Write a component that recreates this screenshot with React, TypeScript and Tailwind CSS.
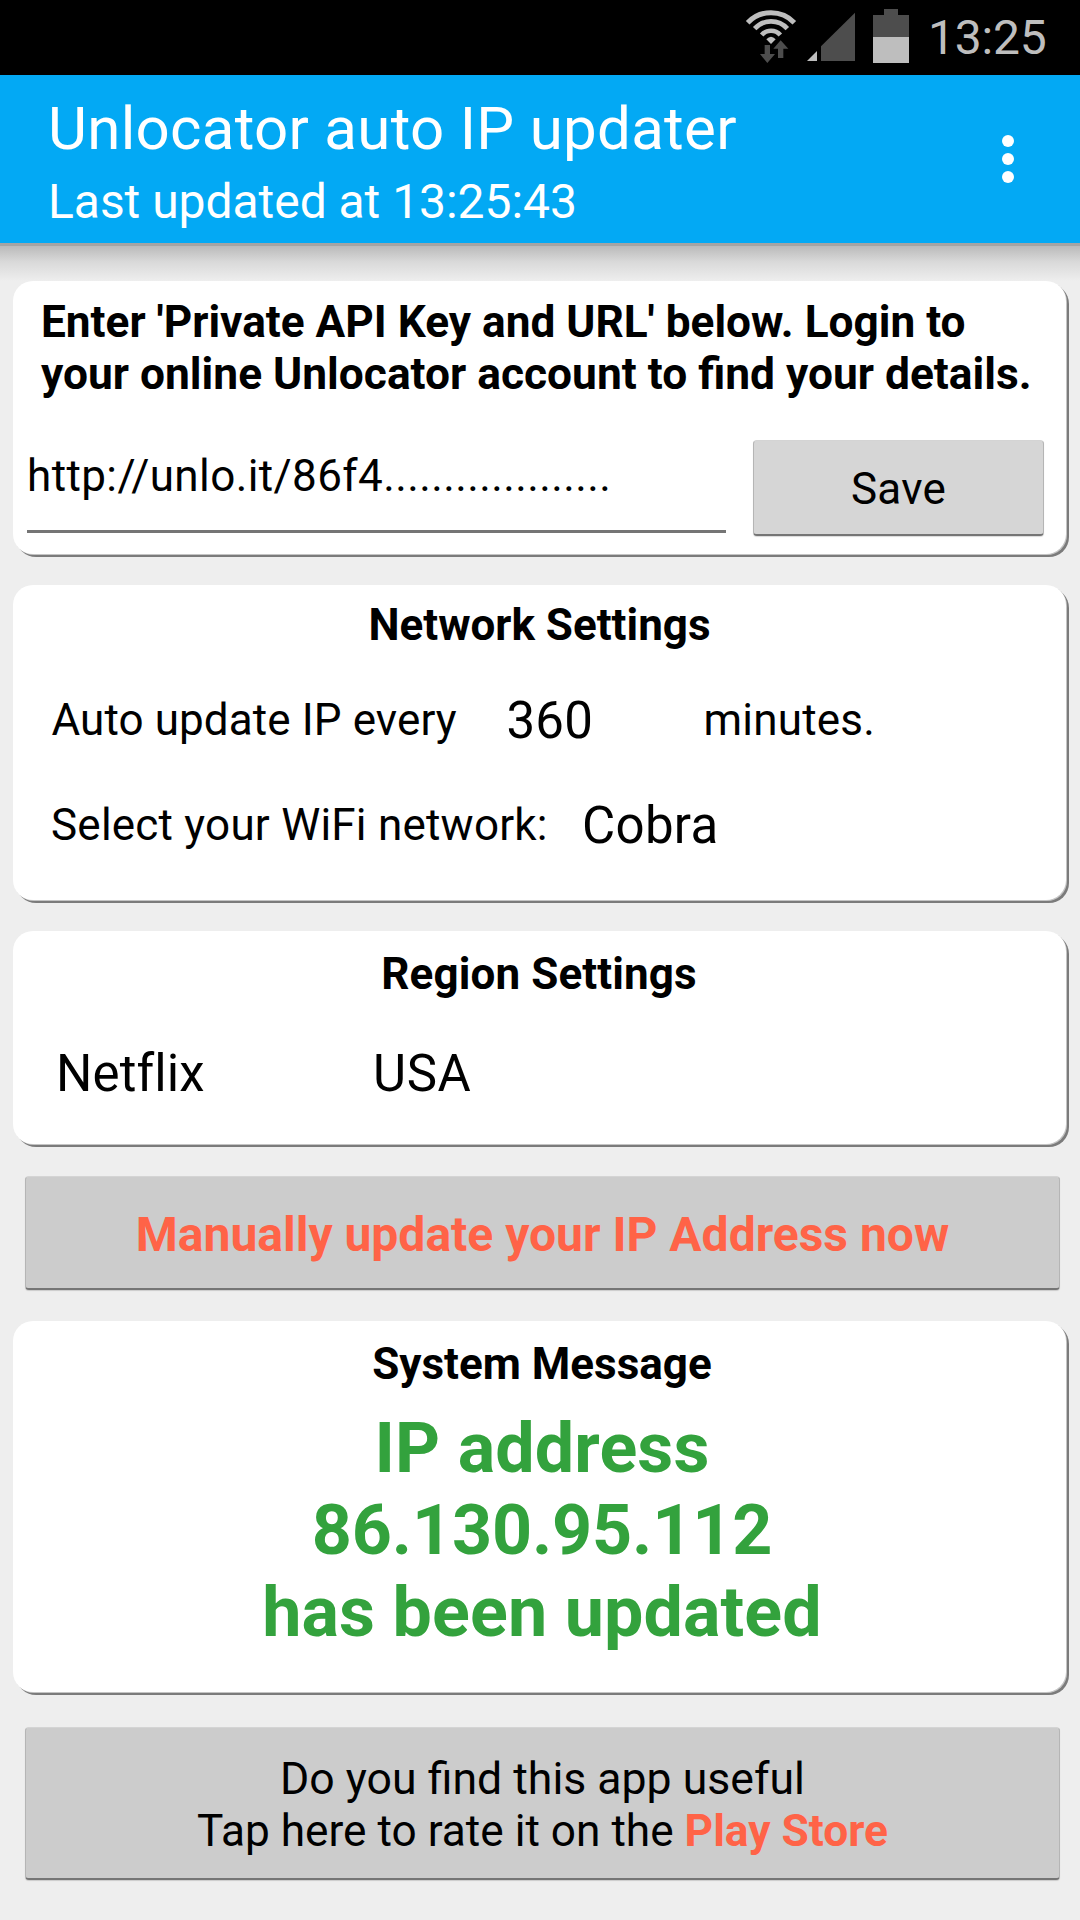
import type { ReactNode } from "react";
import clsx from "clsx";

function WifiIcon() {
  return (
    <svg viewBox="75 0 156 225" className="w-[52px] h-[75px]" fill="none">
      <g stroke="#bebebe">
        <path d="M83 68A97 97 0 0 1 223 68" strokeWidth="15" />
        <path d="M104 86A66 66 0 0 1 202 86" strokeWidth="14" />
        <path d="M125 105A37 37 0 0 1 181 105" strokeWidth="14" />
      </g>
      <path d="M139 118Q153 103 167 118L153 132Z" fill="#bebebe" />
      <path d="M134 135H150V162H165L142 189L120 162H134Z" fill="#4d4d4d" />
      <path d="M182 121L205 146H190V174H174V146H160Z" fill="#4d4d4d" />
    </svg>
  );
}

function SignalIcon() {
  return (
    <svg viewBox="258 0 150 225" className="w-[50px] h-[75px]">
      <path d="M261 183H291V153Z" fill="#bebebe" />
      <path d="M303 183V139L405 38V183Z" fill="#4d4d4d" />
    </svg>
  );
}

function BatteryIcon() {
  return (
    <svg viewBox="456 0 114 225" className="w-[38px] h-[75px]">
      <path d="M492 27H534V45H567V111H459V45H492Z" fill="#4d4d4d" />
      <path d="M459 111H567V189H459Z" fill="#bebebe" />
    </svg>
  );
}

function StatusBar() {
  return (
    <div className="flex h-[75px] items-center justify-end bg-black pr-8">
      <WifiIcon />
      <div className="ml-[9px]"><SignalIcon /></div>
      <div className="ml-4"><BatteryIcon /></div>
      <span className="ml-[18px] w-[120px] whitespace-nowrap text-[48px] leading-[57px] tracking-[-0.2px] text-[#bebebe]">13:25</span>
    </div>
  );
}

function AppBar() {
  return (
    <header className="flex h-[168px] items-center justify-between bg-[#03a9f4] pl-12 pr-[66px] text-white">
      <div className="h-full pt-[18px]">
        <h1 className="text-[60px] leading-[71px] tracking-[0.3px]">Unlocator auto IP updater</h1>
        <p className="mt-[9px] text-[48px] leading-[57px] tracking-[-0.04px]">Last updated at 13:25:43</p>
      </div>
      <button className="flex flex-col gap-1.5" aria-label="More options">
        <span className="size-3 rounded-full bg-white" />
        <span className="size-3 rounded-full bg-white" />
        <span className="size-3 rounded-full bg-white" />
      </button>
    </header>
  );
}

function Card({ className, children }: { className?: string; children: ReactNode }) {
  return (
    <section
      className={clsx(
        "ml-[13px] w-[1053px] rounded-[20px] bg-white shadow-[1px_1px_0_#c4c4c4,3px_3px_0_#7b7b7b]",
        className,
      )}
    >
      {children}
    </section>
  );
}

function GreyButton({ className, children }: { className?: string; children: ReactNode }) {
  return (
    <button
      className={clsx(
        "block rounded-[4px] border-x border-b-2 border-t border-x-[#b5b5b5] border-b-[#757575] border-t-[#d4d4d4] text-center shadow-[0_1px_1px_rgba(0,0,0,0.15)]",
        className,
      )}
    >
      {children}
    </button>
  );
}

export default function App() {
  return (
    <div className="h-[1920px] w-[1080px] overflow-hidden bg-[#eeeeee] font-['Roboto',sans-serif] text-[44px] leading-[52px] text-black">
      <StatusBar />
      <AppBar />
      <div className="h-[38px] border-t-[3px] border-[#a4a4a4] bg-linear-to-b from-[#bababa] via-[#d9d9d9] via-45% to-[#eeeeee]" />

      <Card className="h-[273px] pt-[15px]">
        <p className="whitespace-nowrap pl-7 text-[44.3px] font-bold">
          <span className="text-[44.2px]">Enter 'Private API Key and URL' below. Login to</span>
          <br />
          your online Unlocator account to find your details.
        </p>
        <div className="mt-10 flex pl-3.5">
          <div className="mt-[10px] h-[83px] w-[699px] border-b-[3px] border-[#757575]">
            <span className="tracking-[0.4px]">http://unlo.it/86f4...................</span>
          </div>
          <GreyButton className="ml-[27px] h-[96px] w-[291px] bg-[#d6d6d6] pt-0.5 tracking-[0.2px]">Save</GreyButton>
        </div>
      </Card>

      <Card className="mt-[31px] h-[315px] pt-[14px]">
        <h2 className="text-center font-bold">Network Settings</h2>
        <div className="mt-10 flex items-start pl-[38.5px]">
          <span className="mt-[3px] w-[455px] tracking-[0.1px]">Auto update IP every</span>
          <span className="w-[197px] text-[51px] leading-[59px] tracking-[0.2px]">360</span>
          <span className="mt-[3px] tracking-[0.2px]">minutes.</span>
        </div>
        <div className="mt-[46px] flex items-start pl-[38px]">
          <span className="mt-[3px] w-[531px] tracking-[0.22px]">Select your WiFi network:</span>
          <span className="text-[51px] leading-[59px] tracking-[0.3px]">Cobra</span>
        </div>
      </Card>

      <Card className="mt-[31px] h-[213px] pt-[17px]">
        <h2 className="pr-px text-center font-bold tracking-[0.1px]">Region Settings</h2>
        <div className="mt-11 flex pl-[43px] text-[51px] leading-[59px]">
          <span className="w-[317px] tracking-[0.1px]">Netflix</span>
          <span className="tracking-[0.6px]">USA</span>
        </div>
      </Card>

      <GreyButton className="ml-[25px] mt-8 h-[114px] w-[1035px] bg-[#cccccc] pt-1 text-[48px] font-bold leading-[57px] text-[#ff6347]">
        Manually update your IP Address now
      </GreyButton>

      <Card className="mt-[31px] h-[371px] pl-[5px] pt-[17px] text-center font-bold">
        <h2>System Message</h2>
        <p className="mt-[17px] text-[70px] leading-[82px] text-[#33a23d]">
          <span className="tracking-[0.1px]">IP address</span>
          <br />
          <span className="tracking-[-0.15px]">86.130.95.112</span>
          <br />
          <span className="tracking-[0.1px]">has been updated</span>
        </p>
      </Card>

      <GreyButton className="ml-[25px] mt-[35px] h-[153px] w-[1035px] bg-[#cccccc] pt-1">
        <span className="text-[44.6px]">Do you find this app useful</span>
        <br />
        <span className="text-[44.2px]">Tap here to rate it on the </span>
        <span className="text-[44.3px] font-bold text-[#ff6347]">Play Store</span>
      </GreyButton>
    </div>
  );
}
